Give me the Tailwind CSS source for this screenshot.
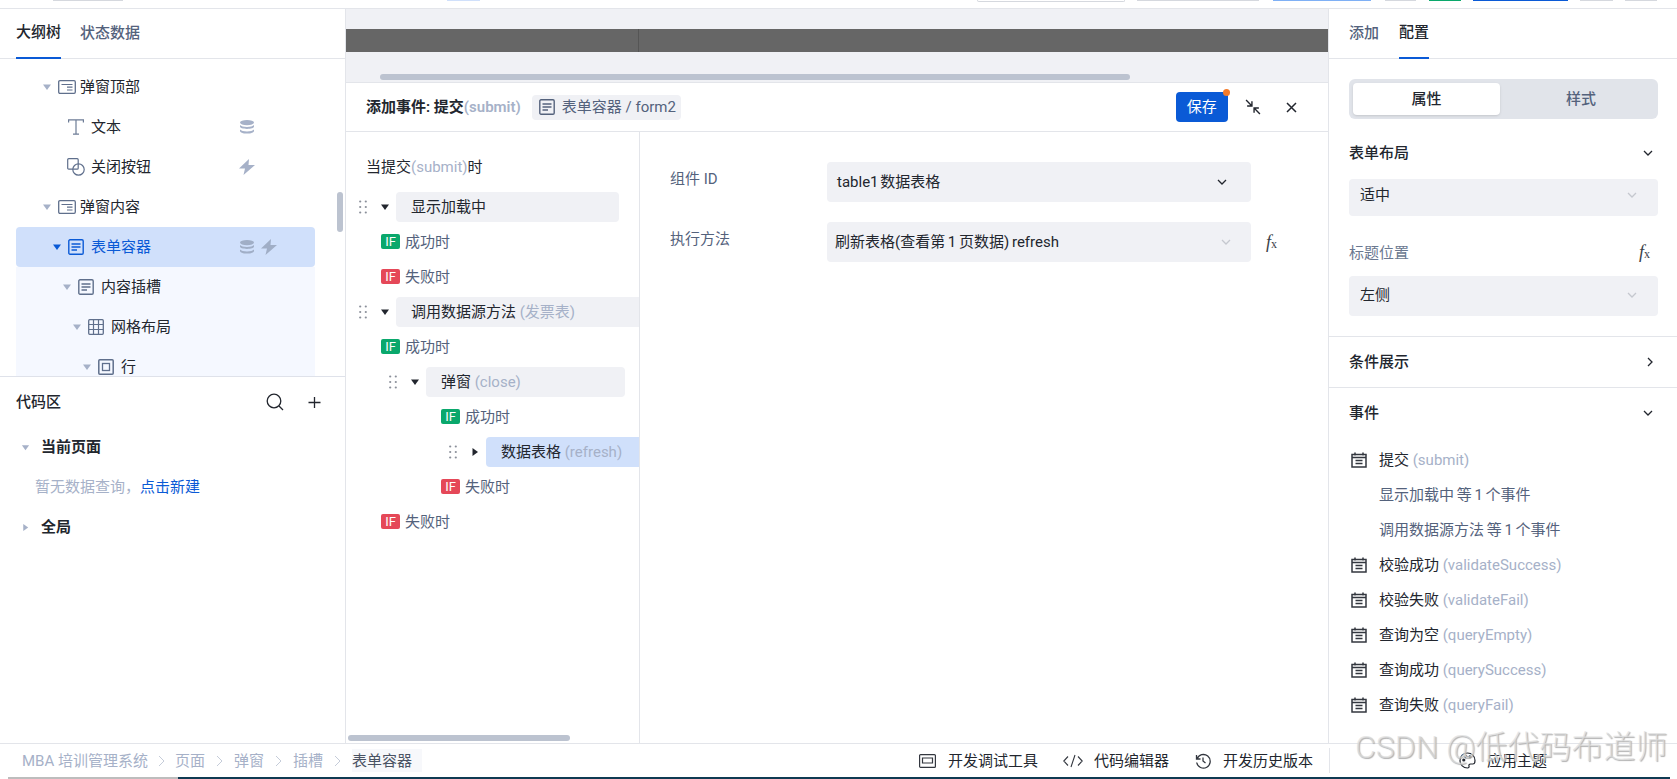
<!DOCTYPE html>
<html lang="zh">
<head>
    <meta charset="UTF-8">
    <title>低代码编辑器</title>
    <script src="https://cdn.jsdelivr.net/npm/@tailwindcss/browser@4"></script>
</head>
<body class="h-[779px] w-[1677px] overflow-hidden bg-white text-[15px] leading-6 text-[#22262e] [font-family:Roboto,'Noto_Sans_CJK_SC',sans-serif]">
    <!-- shared icons -->
    <svg class="hidden">
        <symbol id="down" viewBox="0 0 10 10"><path d="M1 2.500h8L5 8z" fill="currentColor"/></symbol>
        <symbol id="right" viewBox="0 0 10 10"><path d="M2.500 1v8L8 5z" fill="currentColor"/></symbol>
        <symbol id="head" viewBox="0 0 18 14"><rect x=".7" y=".7" width="16.600" height="12.600" rx="1.200" fill="none" stroke="currentColor" stroke-width="1.300"/><path d="M3.500 4.500h11M9 7.200h5.500M9 10h5.500" stroke="currentColor" stroke-width="1.200"/></symbol>
        <symbol id="form" viewBox="0 0 16 16"><rect x=".8" y=".8" width="14.400" height="14.400" rx="1.200" fill="none" stroke="currentColor" stroke-width="1.400"/><path d="M3.500 5h9M3.500 8h9M3.500 11h5.500" stroke="currentColor" stroke-width="1.300"/></symbol>
        <symbol id="db" viewBox="0 0 16 14"><ellipse cx="8" cy="2.600" rx="7" ry="2.600" fill="currentColor"/><path d="M1 5v1.600C1 8 4 9 8 9s7-1 7-2.400V5c-1 1.200-3.800 2-7 2S2 6.200 1 5zM1 9.400V11c0 1.500 3 2.600 7 2.600s7-1.100 7-2.600V9.400c-1 1.200-3.800 2-7 2s-6-.8-7-2z" fill="currentColor"/></symbol>
        <symbol id="bolt" viewBox="0 0 16 16"><path d="M10 0 0 9.500h6L4.500 16 16 6H9.500z" fill="currentColor"/></symbol>
        <symbol id="event" viewBox="0 0 16 16"><path d="M1 2.500h14v12.500H1zM1 5.500h14M4 .5v3M12 .5v3" fill="none" stroke="currentColor" stroke-width="1.500"/><path d="M4.500 8.500h7M4.500 11.500h7" stroke="currentColor" stroke-width="1.300"/></symbol>
        <symbol id="grip" viewBox="0 0 8 14"><g fill="#8a8f99"><circle cx="1.200" cy="1.500" r="1.100"/><circle cx="6.800" cy="1.500" r="1.100"/><circle cx="1.200" cy="7" r="1.100"/><circle cx="6.800" cy="7" r="1.100"/><circle cx="1.200" cy="12.500" r="1.100"/><circle cx="6.800" cy="12.500" r="1.100"/></g></symbol>
        <symbol id="chev" viewBox="0 0 10 6"><path d="M1 1l4 4 4-4" fill="none" stroke="currentColor" stroke-width="1.300"/></symbol>
    </svg>

    <div class="flex h-full flex-col">
        <!-- top toolbar, almost cropped away -->
        <div class="flex h-[9px] shrink-0 items-start border-b border-[#e3e5ea]">
            <div class="ml-[53px] h-px w-[70px] bg-[#d5d8de]"></div>
            <div class="ml-[324px] h-px w-[33px] bg-[#d0e0fb]"></div>
            <div class="ml-[497px] h-[2px] w-[148px] rounded-b border border-t-0 border-[#d5d8de]"></div>
            <div class="ml-[12px] h-px w-[122px] bg-[#d5d8de]"></div>
            <div class="ml-[14px] h-px w-[98px] bg-[#7fb0f5]"></div>
            <div class="ml-[14px] h-px w-[31px] bg-[#d5d8de]"></div>
            <div class="ml-[13px] h-px w-[32px] bg-[#0aa86c]"></div>
            <div class="ml-[12px] h-px w-[95px] bg-[#0a5ad6]"></div>
            <div class="ml-[12px] h-px w-[33px] bg-[#d5d8de]"></div>
            <div class="ml-[12px] h-px w-[32px] bg-[#d5d8de]"></div>
        </div>

        <div class="flex min-h-0 flex-1">
            <!-- left panel -->
            <aside class="flex w-[346px] shrink-0 flex-col border-r border-[#e3e5ea]">
                <div class="flex h-[50px] shrink-0 gap-[19px] border-b border-[#e3e5ea] pl-4">
                    <div class="-mb-px flex h-[50px] items-center border-b-2 border-[#0a5ad6] pb-[2px] font-medium">大纲树</div>
                    <div class="flex h-[49px] items-center pb-[2px] font-medium text-[#54627c]">状态数据</div>
                </div>
                <div class="relative h-[317px] shrink-0 overflow-hidden pt-2">
                    <div class="absolute top-[133px] right-[2px] h-[40px] w-[6px] rounded bg-[#bcc3d0]"></div>
                    <div class="flex h-10 items-center pl-[42px]">
                        <svg class="size-[10px] text-[#a6b1c8]"><use href="#down"/></svg>
                        <svg class="ml-[6px] h-[14px] w-[18px] text-[#5f6f8c]"><use href="#head"/></svg>
                        <span class="ml-[4px]">弹窗顶部</span>
                    </div>
                    <div class="flex h-10 items-center pl-[68px]">
                        <svg class="h-[16px] w-[16px] text-[#6d7c96]" viewBox="0 0 16 16" fill="none" stroke="currentColor" stroke-width="1.200"><path d="M.6 3.500V.8h14.800v2.700M8 .8v14.400M5 15.200h6"/></svg>
                        <span class="ml-[7px] w-[148px]">文本</span>
                        <svg class="h-[14px] w-[16px] text-[#a6b1c8]"><use href="#db"/></svg>
                    </div>
                    <div class="flex h-10 items-center pl-[67px]">
                        <svg class="size-[18px] text-[#5f6f8c]" viewBox="0 0 18 18"><rect x=".7" y=".7" width="10.500" height="10.500" rx="1" fill="none" stroke="currentColor" stroke-width="1.200"/><circle cx="11.500" cy="11.500" r="5.700" fill="none" stroke="currentColor" stroke-width="1.200"/></svg>
                        <span class="ml-[6px] w-[148px]">关闭按钮</span>
                        <svg class="size-[16px] text-[#a6b1c8]"><use href="#bolt"/></svg>
                    </div>
                    <div class="flex h-10 items-center pl-[42px]">
                        <svg class="size-[10px] text-[#a6b1c8]"><use href="#down"/></svg>
                        <svg class="ml-[6px] h-[14px] w-[18px] text-[#5f6f8c]"><use href="#head"/></svg>
                        <span class="ml-[4px]">弹窗内容</span>
                    </div>
                    <div class="ml-4 flex h-10 w-[299px] items-center rounded bg-[#d0e0fb] pl-[36px] text-[#0a5ad6]">
                        <svg class="size-[10px] text-[#0a5ad6]"><use href="#down"/></svg>
                        <svg class="ml-[6px] size-[16px]"><use href="#form"/></svg>
                        <span class="ml-[7px] w-[148px]">表单容器</span>
                        <svg class="h-[14px] w-[16px] text-[#a0aec6]"><use href="#db"/></svg>
                        <svg class="ml-[6px] size-[16px] text-[#a0aec6]"><use href="#bolt"/></svg>
                    </div>
                    <div class="ml-4 flex h-10 w-[299px] items-center bg-[#f5f8ff] pl-[46px]">
                        <svg class="size-[10px] text-[#a6b1c8]"><use href="#down"/></svg>
                        <svg class="ml-[6px] size-[16px] text-[#5f6f8c]"><use href="#form"/></svg>
                        <span class="ml-[7px]">内容插槽</span>
                    </div>
                    <div class="ml-4 flex h-10 w-[299px] items-center bg-[#f5f8ff] pl-[56px]">
                        <svg class="size-[10px] text-[#a6b1c8]"><use href="#down"/></svg>
                        <svg class="ml-[6px] size-[16px] text-[#5f6f8c]" viewBox="0 0 16 16"><rect x=".7" y=".7" width="14.600" height="14.600" rx="1" fill="none" stroke="currentColor" stroke-width="1.300"/><path d="M5.500 1v14M10.500 1v14M1 5.500h14M1 10.500h14" stroke="currentColor" stroke-width="1.200"/></svg>
                        <span class="ml-[7px]">网格布局</span>
                    </div>
                    <div class="ml-4 flex h-10 w-[299px] items-center bg-[#f5f8ff] pl-[66px]">
                        <svg class="size-[10px] text-[#a6b1c8]"><use href="#down"/></svg>
                        <svg class="ml-[6px] size-[16px] text-[#5f6f8c]" viewBox="0 0 16 16"><rect x=".8" y=".8" width="14.400" height="14.400" rx="1" fill="none" stroke="currentColor" stroke-width="1.500"/><rect x="4.500" y="4.500" width="7" height="7" fill="none" stroke="currentColor" stroke-width="1.300"/></svg>
                        <span class="ml-[7px]">行</span>
                    </div>
                </div>
                <div class="min-h-0 flex-1 border-t border-[#dfe2ea]">
                    <div class="flex h-[50px] items-center pl-4">
                        <span class="w-[250px] font-medium">代码区</span>
                        <svg class="size-[18px]" viewBox="0 0 18 18" fill="none" stroke="#22262e" stroke-width="1.300"><circle cx="8" cy="8" r="6.800"/><path d="M13 13l4 4"/></svg>
                        <svg class="ml-[24px] size-[13px]" viewBox="0 0 13 13" stroke="#22262e" stroke-width="1.300"><path d="M6.500 1v11M.5 6.500h12"/></svg>
                    </div>
                    <div class="flex h-10 items-center pl-[21px] font-semibold">
                        <svg class="size-[9px] text-[#a6b1c8]"><use href="#down"/></svg>
                        <span class="ml-[11px]">当前页面</span>
                    </div>
                    <div class="flex h-10 items-center pl-[35px] text-[#a6b1c8]">暂无数据查询，<span class="text-[#0a5ad6]">点击新建</span></div>
                    <div class="flex h-10 items-center pl-[21px] font-semibold">
                        <svg class="size-[9px] text-[#a6b1c8]"><use href="#right"/></svg>
                        <span class="ml-[11px]">全局</span>
                    </div>
                </div>
            </aside>

            <!-- center: canvas strip and event editor -->
            <main class="flex min-w-0 flex-1 flex-col">
                <div class="flex h-[74px] shrink-0 flex-col border-b border-[#e3e5ea] bg-[#f0f1f5]">
                    <div class="mt-5 flex h-[23px] bg-[#666666]">
                        <div class="w-[293px] border-r border-[#555555]"></div>
                    </div>
                    <div class="mt-[22px] ml-[34px] h-[6px] w-[750px] rounded bg-[#bcc3d0]"></div>
                </div>
                <div class="flex h-[49px] shrink-0 items-center border-b border-[#e3e5ea] pl-5">
                    <span class="font-semibold">添加事件: 提交<span class="text-[#a6b1c8]">(submit)</span></span>
                    <div class="ml-[11px] flex h-[25px] w-[149px] items-center rounded bg-[#f0f1f5] pl-[7px] text-[#54627c]">
                        <svg class="size-[16px] text-[#54627c]"><use href="#form"/></svg>
                        <span class="ml-[7px]">表单容器 / form2</span>
                    </div>
                    <div class="relative ml-[495px] flex h-[30px] w-[52px] items-center justify-center rounded bg-[#0a5ad6] text-white">
                        保存
                        <div class="absolute -top-[3px] -right-[2px] size-[7px] rounded-full bg-[#f47b2a]"></div>
                    </div>
                    <svg class="ml-[17px] size-[16px]" viewBox="0 0 15 15" fill="none" stroke="#22262e" stroke-width="1.300"><path d="M1 1l5.500 5.500M2 6.500h4.500V2M14 14L8.500 8.500M13 8.500H8.500V13"/></svg>
                    <svg class="ml-[25px] size-[11px]" viewBox="0 0 11 11" stroke="#22262e" stroke-width="1.500"><path d="M1 1l9 9M10 1l-9 9"/></svg>
                </div>
                <div class="flex min-h-0 flex-1">
                    <!-- event tree -->
                    <div class="relative w-[294px] shrink-0 border-r border-[#e3e5ea] pl-5">
                        <div class="mt-[23px] mb-[13px] h-6">当提交<span class="text-[#a6b1c8]">(submit)</span>时</div>

                        <div class="mt-[3px] mb-[2px] -ml-[7px] flex h-[30px] items-center">
                            <svg class="h-[14px] w-2"><use href="#grip"/></svg>
                            <svg class="ml-[13px] size-[10px]"><use href="#down"/></svg>
                            <div class="ml-[6px] flex h-[30px] w-[223px] items-center rounded bg-[#f0f1f5] pl-[15px]">显示加载中</div>
                        </div>
                        <div class="flex h-[35px] items-center pl-[15px] text-[#54627c]"><span class="flex h-[15px] w-[19px] items-center justify-center rounded-[2px] bg-[#0aa86c] text-[13px] text-white">IF</span><span class="ml-[5px]">成功时</span></div>
                        <div class="flex h-[35px] items-center pl-[15px] text-[#54627c]"><span class="flex h-[15px] w-[19px] items-center justify-center rounded-[2px] bg-[#e54858] text-[13px] text-white">IF</span><span class="ml-[5px]">失败时</span></div>

                        <div class="mt-[3px] mb-[2px] -ml-[7px] flex h-[30px] items-center">
                            <svg class="h-[14px] w-2"><use href="#grip"/></svg>
                            <svg class="ml-[13px] size-[10px]"><use href="#down"/></svg>
                            <div class="ml-[6px] flex h-[30px] flex-1 items-center rounded-l bg-[#f0f1f5] pl-[15px]">调用数据源方法&nbsp;<span class="text-[#a6b1c8]">(发票表)</span></div>
                        </div>
                        <div class="flex h-[35px] items-center pl-[15px] text-[#54627c]"><span class="flex h-[15px] w-[19px] items-center justify-center rounded-[2px] bg-[#0aa86c] text-[13px] text-white">IF</span><span class="ml-[5px]">成功时</span></div>

                        <div class="mt-[3px] mb-[2px] ml-[23px] flex h-[30px] items-center">
                            <svg class="h-[14px] w-2"><use href="#grip"/></svg>
                            <svg class="ml-[13px] size-[10px]"><use href="#down"/></svg>
                            <div class="ml-[6px] flex h-[30px] w-[199px] items-center rounded bg-[#f0f1f5] pl-[15px]">弹窗&nbsp;<span class="text-[#a6b1c8]">(close)</span></div>
                        </div>
                        <div class="flex h-[35px] items-center pl-[75px] text-[#54627c]"><span class="flex h-[15px] w-[19px] items-center justify-center rounded-[2px] bg-[#0aa86c] text-[13px] text-white">IF</span><span class="ml-[5px]">成功时</span></div>

                        <div class="mt-[3px] mb-[2px] ml-[83px] flex h-[30px] items-center">
                            <svg class="h-[14px] w-2"><use href="#grip"/></svg>
                            <svg class="ml-[13px] size-[10px]"><use href="#right"/></svg>
                            <div class="ml-[6px] flex h-[30px] flex-1 items-center rounded-l bg-[#d0e0fb] pl-[15px]">数据表格&nbsp;<span class="text-[#a6b1c8]">(refresh)</span></div>
                        </div>
                        <div class="flex h-[35px] items-center pl-[75px] text-[#54627c]"><span class="flex h-[15px] w-[19px] items-center justify-center rounded-[2px] bg-[#e54858] text-[13px] text-white">IF</span><span class="ml-[5px]">失败时</span></div>
                        <div class="flex h-[35px] items-center pl-[15px] text-[#54627c]"><span class="flex h-[15px] w-[19px] items-center justify-center rounded-[2px] bg-[#e54858] text-[13px] text-white">IF</span><span class="ml-[5px]">失败时</span></div>

                        <div class="absolute bottom-[2px] left-[2px] h-[6px] w-[222px] rounded bg-[#bcc3d0]"></div>
                    </div>
                    <!-- action form -->
                    <div class="flex flex-1 flex-col gap-5 pt-[30px] pl-[30px]">
                        <div class="flex h-10">
                            <div class="w-[157px] pt-[5px] text-[#54627c]">组件 ID</div>
                            <div class="flex h-10 w-[424px] items-center justify-between rounded bg-[#f0f1f5] pr-[24px] pb-px pl-[10px] [word-spacing:-2px]">
                                <span>table1 数据表格</span>
                                <svg class="h-[6px] w-[10px] text-[#22262e]"><use href="#chev"/></svg>
                            </div>
                        </div>
                        <div class="flex h-10">
                            <div class="w-[157px] pt-[5px] text-[#54627c]">执行方法</div>
                            <div class="flex h-10 w-[424px] items-center justify-between rounded bg-[#f0f1f5] pr-[20px] pb-px pl-[8px] [word-spacing:-1px]">
                                <span>刷新表格(查看第 1 页数据) refresh</span>
                                <svg class="h-[6px] w-[10px] text-[#c5c8cf]"><use href="#chev"/></svg>
                            </div>
                            <span class="ml-[15px] flex h-10 items-baseline pt-2 text-[#3a3f48] [font-family:'Liberation_Serif',serif]"><span class="text-[18px] italic">f</span><span class="text-[12px]">x</span></span>
                        </div>
                    </div>
                </div>
            </main>

            <!-- right config panel -->
            <aside class="flex w-[349px] shrink-0 flex-col overflow-hidden border-l border-[#e3e5ea]">
                <div class="flex h-[50px] shrink-0 gap-5 border-b border-[#e3e5ea] pl-5">
                    <div class="flex h-[49px] items-center pb-[2px] font-medium text-[#54627c]">添加</div>
                    <div class="-mb-px flex h-[50px] items-center border-b-2 border-[#0a5ad6] pb-[2px] font-medium">配置</div>
                </div>
                <div class="border-b border-[#e3e5ea] px-5 pt-5 pb-5">
                    <div class="flex h-10 w-[309px] rounded-md bg-[#e1e4ea] p-1">
                        <div class="flex h-8 w-[147px] items-center justify-center rounded-sm bg-white font-medium shadow-sm">属性</div>
                        <div class="flex h-8 flex-1 items-center justify-center pl-[8px] font-medium text-[#54627c]">样式</div>
                    </div>
                    <div class="mt-[22px] flex h-6 w-[309px] items-center justify-between pr-[5px] font-medium">
                        表单布局
                        <svg class="h-[6px] w-[10px] text-[#22262e]"><use href="#chev"/></svg>
                    </div>
                    <div class="mt-[14px] flex h-[37px] w-[309px] items-center justify-between rounded bg-[#f0f1f5] pr-[21px] pb-[5px] pl-[11px]">
                        适中
                        <svg class="h-[6px] w-[10px] text-[#c5c8cf]"><use href="#chev"/></svg>
                    </div>
                    <div class="mt-[25px] flex h-6 w-[309px] items-center justify-between pr-2 text-[#6a7890]">
                        标题位置
                        <span class="text-[#3a3f48] [font-family:'Liberation_Serif',serif]"><span class="text-[18px] italic">f</span><span class="text-[12px]">x</span></span>
                    </div>
                    <div class="mt-[11px] flex h-10 w-[309px] items-center justify-between rounded bg-[#f0f1f5] pr-[21px] pb-[2px] pl-[11px]">
                        左侧
                        <svg class="h-[6px] w-[10px] text-[#c5c8cf]"><use href="#chev"/></svg>
                    </div>
                </div>
                <div class="flex h-[51px] shrink-0 items-center justify-between border-b border-[#e3e5ea] pr-6 pl-5 font-medium">
                    条件展示
                    <svg class="h-[10px] w-[6px] text-[#22262e]" viewBox="0 0 6 10"><path d="M1 1l4 4-4 4" fill="none" stroke="currentColor" stroke-width="1.300"/></svg>
                </div>
                <div class="flex h-[50px] shrink-0 items-center justify-between pr-6 pl-5 font-medium">
                    事件
                    <svg class="h-[6px] w-[10px] text-[#22262e]"><use href="#chev"/></svg>
                </div>
                <div class="pt-[4px] pl-[22px]">
                    <div class="flex h-[35px] items-center"><svg class="size-4 text-[#33373f]"><use href="#event"/></svg><span class="ml-[12px]">提交 <span class="text-[#a6b1c8]">(submit)</span></span></div>
                    <div class="flex h-[35px] items-center pl-[28px] text-[#54627c] [word-spacing:-1px]">显示加载中 等 1 个事件</div>
                    <div class="flex h-[35px] items-center pl-[28px] text-[#54627c] [word-spacing:-1px]">调用数据源方法 等 1 个事件</div>
                    <div class="flex h-[35px] items-center"><svg class="size-4 text-[#33373f]"><use href="#event"/></svg><span class="ml-[12px]">校验成功 <span class="text-[#a6b1c8]">(validateSuccess)</span></span></div>
                    <div class="flex h-[35px] items-center"><svg class="size-4 text-[#33373f]"><use href="#event"/></svg><span class="ml-[12px]">校验失败 <span class="text-[#a6b1c8]">(validateFail)</span></span></div>
                    <div class="flex h-[35px] items-center"><svg class="size-4 text-[#33373f]"><use href="#event"/></svg><span class="ml-[12px]">查询为空 <span class="text-[#a6b1c8]">(queryEmpty)</span></span></div>
                    <div class="flex h-[35px] items-center"><svg class="size-4 text-[#33373f]"><use href="#event"/></svg><span class="ml-[12px]">查询成功 <span class="text-[#a6b1c8]">(querySuccess)</span></span></div>
                    <div class="flex h-[35px] items-center"><svg class="size-4 text-[#33373f]"><use href="#event"/></svg><span class="ml-[12px]">查询失败 <span class="text-[#a6b1c8]">(queryFail)</span></span></div>
                </div>
            </aside>
        </div>

        <!-- bottom status bar -->
        <footer class="relative z-10 h-[36px] shrink-0 border-t border-[#e3e5ea] bg-white">
            <div class="flex h-[33px] items-center">
                <div class="flex h-[33px] w-[422px] items-center pl-[22px] text-[#a6b1c8]">
                    <span>MBA 培训管理系统</span>
                    <svg class="mx-[10px] h-3 w-[7px]" viewBox="0 0 7 12"><path d="M1 1l5 5-5 5" fill="none" stroke="#c5ccd9" stroke-width="1"/></svg>
                    <span>页面</span>
                    <svg class="mx-[11px] h-3 w-[7px]" viewBox="0 0 7 12"><path d="M1 1l5 5-5 5" fill="none" stroke="#c5ccd9" stroke-width="1"/></svg>
                    <span>弹窗</span>
                    <svg class="mx-[11px] h-3 w-[7px]" viewBox="0 0 7 12"><path d="M1 1l5 5-5 5" fill="none" stroke="#c5ccd9" stroke-width="1"/></svg>
                    <span>插槽</span>
                    <svg class="mx-[11px] h-3 w-[7px]" viewBox="0 0 7 12"><path d="M1 1l5 5-5 5" fill="none" stroke="#c5ccd9" stroke-width="1"/></svg>
                    <span class="flex h-[23px] flex-1 items-center bg-[#f7f8fb] text-[#4a5364]">表单容器</span>
                </div>
                <svg class="ml-[497px] h-[14px] w-[17px]" viewBox="0 0 17 14" fill="none" stroke="#33373f" stroke-width="1.200"><rect x=".6" y=".6" width="15.800" height="12.800" rx="1"/><path d="M3.500 4h10v5h-10z"/></svg>
                <span class="ml-[12px]">开发调试工具</span>
                <svg class="ml-[25px] h-[14px] w-[20px]" viewBox="0 0 20 14" fill="none" stroke="#33373f" stroke-width="1.100"><path d="M5 2.500L.8 7 5 11.500M15 2.500L19.200 7 15 11.500M12 1L8 13"/></svg>
                <span class="ml-[11px]">代码编辑器</span>
                <svg class="ml-[26px] size-4" viewBox="0 0 16 16" fill="none" stroke="#33373f" stroke-width="1.300"><path d="M1.500 2v4h4M2 6a6.800 6.800 0 1 1-.3 3.500M8 4.500V8l2.500 2"/></svg>
                <span class="ml-[12px]">开发历史版本</span>
                <div class="ml-[16px] h-[25px] w-px bg-[#e3e5ea]"></div>
                <svg class="ml-[129px] size-[17px]" viewBox="0 0 17 17" fill="none" stroke="#22262e" stroke-width="1.200"><path d="M8.500 1C4.300 1 1 4.300 1 8.500S4.300 16 8.500 16c1.300 0 1.800-.8 1.500-1.800-.4-1.300.3-2.200 1.500-2.200H14c1.300 0 2-1 2-3.500C16 4.300 12.700 1 8.500 1z"/><circle cx="4.800" cy="8" r="1" fill="#22262e"/><circle cx="7" cy="4.800" r="1" fill="#22262e"/><circle cx="11" cy="4.800" r="1" fill="#22262e"/></svg>
                <span class="ml-[11px]">应用主题</span>
            </div>
            <div class="flex h-[2px]">
                <div class="ml-2 w-[170px] bg-[#bdbdbd]"></div>
                <div class="w-[1492px] bg-[#0f3a52]"></div>
            </div>
        </footer>
    </div>

    <!-- CSDN watermark laid over the page -->
    <div class="absolute top-[727px] left-[1355px] z-20 text-[32px] leading-10 font-light whitespace-nowrap text-[#dedede]/70 [text-shadow:1px_1px_1px_#b0b0b0]">CSDN @低代码布道师</div>
</body>
</html>
